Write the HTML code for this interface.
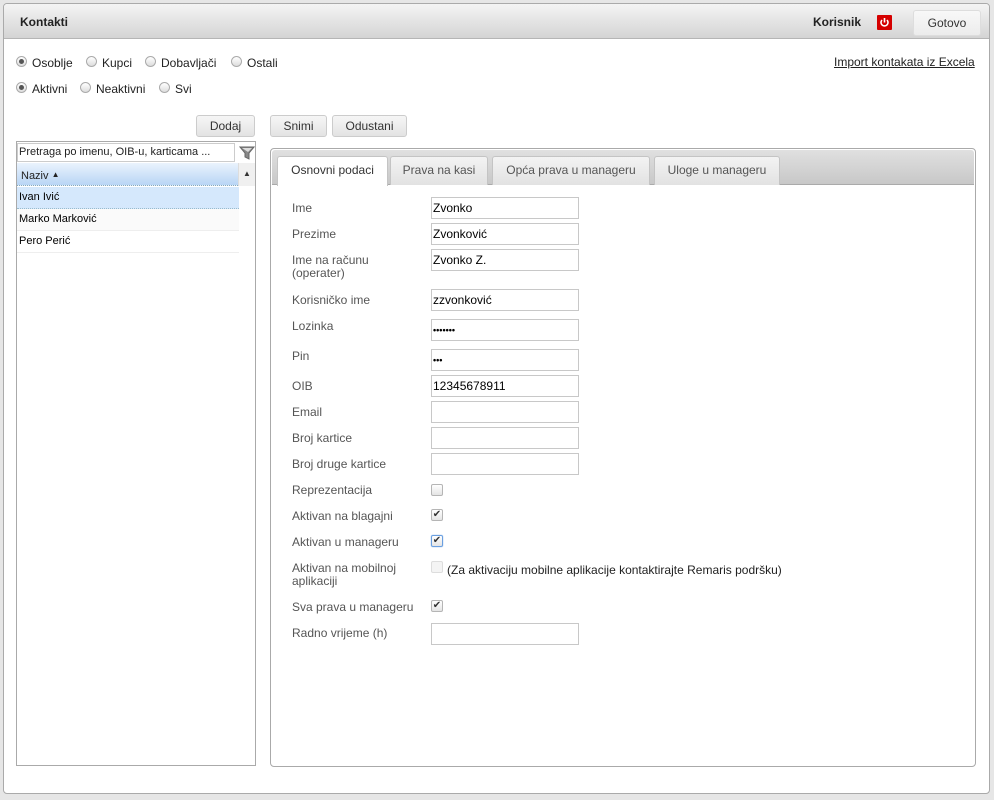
<!DOCTYPE html>
<html><head><meta charset="utf-8"><style>
*{box-sizing:border-box;margin:0;padding:0}
body{width:994px;height:800px;background:#e6e6e6;font-family:"Liberation Sans",Arial,sans-serif;font-size:12px;color:#222;position:relative;overflow:hidden}
.a{position:absolute}
#main{left:3px;top:3px;width:987px;height:791px;background:#fff;border:1px solid #aaa;border-radius:4px}
#hdr{left:4px;top:4px;width:985px;height:35px;background:linear-gradient(#f4f4f4,#d4d4d4);border-bottom:1px solid #b5b5b5;border-radius:3px 3px 0 0}
.btn{position:absolute;height:22px;border:1px solid #ccc;border-radius:3px;background:linear-gradient(#f6f6f6,#e3e3e3);color:#333;font-size:12px;text-align:center;line-height:20px}
.rad{position:absolute;width:11px;height:11px;border:1px solid #aaa;border-radius:50%;background:linear-gradient(#fff,#ddd)}
.rad.on::after{content:"";position:absolute;left:2px;top:2px;width:5px;height:5px;border-radius:50%;background:#555}
.lbl{position:absolute;left:292px;color:#555;font-size:12px;line-height:13px}
.inp{position:absolute;left:431px;width:148px;height:22px;border:1px solid #c8c8c8;font-size:12px;line-height:20px;padding-left:1px;color:#000}
.cb{position:absolute;left:431px;width:12px;height:12px;border:1px solid #b5b5b5;border-radius:2px;background:linear-gradient(#fff,#e4e4e4);font-size:10px;line-height:10px;text-align:center;color:#333}
.tab{position:absolute;top:156px;height:29px;border:1px solid #c4c4c4;border-bottom:none;border-radius:3px 3px 0 0;background:linear-gradient(#f3f3f3,#e2e2e2);color:#555;text-align:center;line-height:27px;font-size:12px}
.row{position:absolute;left:17px;width:222px;height:22px;line-height:21px;padding-left:2px;font-size:11px;color:#000;border-bottom:1px solid #eee}
</style></head><body>
<div class="a" id="main"></div>
<div class="a" id="hdr"></div>
<div class="a" style="left:20px;top:15px;font-weight:bold;font-size:12px;color:#222">Kontakti</div>
<div class="a" style="left:813px;top:15px;font-weight:bold;font-size:12px;color:#222">Korisnik</div>
<div class="a" style="left:877px;top:15px;width:15px;height:15px;background:#d50000;border-radius:1px"><svg width="15" height="15" viewBox="0 0 15 15"><path d="M5 5A3.5 3.5 0 1 0 10 5" fill="none" stroke="#fff" stroke-width="1.6"/><path d="M7.5 3v4.5" stroke="#fff" stroke-width="1.6"/></svg></div>
<div class="btn" style="left:913px;top:10px;width:68px;height:26px;line-height:24px;background:linear-gradient(#f8f8f8,#ececec);border-color:#ddd">Gotovo</div>
<div class="a" style="left:834px;top:55px;text-decoration:underline;color:#222">Import kontakata iz Excela</div>

<div class="rad on" style="left:16px;top:56px"></div><div class="a" style="left:32px;top:56px">Osoblje</div>
<div class="rad" style="left:86px;top:56px"></div><div class="a" style="left:102px;top:56px">Kupci</div>
<div class="rad" style="left:145px;top:56px"></div><div class="a" style="left:161px;top:56px">Dobavljači</div>
<div class="rad" style="left:231px;top:56px"></div><div class="a" style="left:247px;top:56px">Ostali</div>
<div class="rad on" style="left:16px;top:82px"></div><div class="a" style="left:32px;top:82px">Aktivni</div>
<div class="rad" style="left:80px;top:82px"></div><div class="a" style="left:96px;top:82px">Neaktivni</div>
<div class="rad" style="left:159px;top:82px"></div><div class="a" style="left:175px;top:82px">Svi</div>

<div class="btn" style="left:196px;top:115px;width:59px">Dodaj</div>
<div class="btn" style="left:270px;top:115px;width:57px">Snimi</div>
<div class="btn" style="left:332px;top:115px;width:75px">Odustani</div>

<div class="a" style="left:16px;top:141px;width:240px;height:625px;border:1px solid #aaa"></div>
<div class="a" style="left:17px;top:143px;width:218px;height:19px;border:1px solid #ccc;font-size:11px;line-height:17px;padding-left:1px;color:#222">Pretraga po imenu, OIB-u, karticama ...</div>
<svg class="a" style="left:239px;top:145px" width="16" height="16" viewBox="0 0 16 16"><path d="M1 2h14l-5 6v6l-4-2v-4z" fill="#888" stroke="#666"/><path d="M3 3h10l-4 4" fill="#ddd"/></svg>
<div class="a" style="left:17px;top:163px;width:221px;height:23px;background:linear-gradient(#eaf3fd,#b8d5f5);border-bottom:1px dotted #8ab;font-size:11px;line-height:23px;padding-left:4px">Naziv <span style="font-size:8px;vertical-align:2px">▲</span></div>
<div class="a" style="left:238px;top:163px;width:17px;height:23px;background:#f0f0f0;border-left:1px solid #ddd;font-size:8px;text-align:center;line-height:22px;color:#333">▲</div>
<div class="row" style="top:187px;background:#d5e8fc;border-bottom:1px dotted #9bc">Ivan Ivić</div>
<div class="row" style="top:209px;background:#fafafa">Marko Marković</div>
<div class="row" style="top:231px">Pero Perić</div>

<div class="a" style="left:270px;top:148px;width:706px;height:619px;border:1px solid #aaa;border-radius:4px"></div>
<div class="a" style="left:272px;top:150px;width:702px;height:35px;background:linear-gradient(#e0e0e0,#c8c8c8);border-bottom:1px solid #aaa;border-radius:3px 3px 0 0"></div>
<div class="tab" style="left:277px;width:111px;background:#fff;color:#333;height:30px">Osnovni podaci</div>
<div class="tab" style="left:390px;width:98px">Prava na kasi</div>
<div class="tab" style="left:492px;width:158px">Opća prava u manageru</div>
<div class="tab" style="left:654px;width:126px">Uloge u manageru</div>

<div class="lbl" style="top:202px">Ime</div><div class="inp" style="top:197px">Zvonko</div>
<div class="lbl" style="top:228px">Prezime</div><div class="inp" style="top:223px">Zvonković</div>
<div class="lbl" style="top:254px">Ime na računu<br>(operater)</div><div class="inp" style="top:249px">Zvonko Z.</div>
<div class="lbl" style="top:294px">Korisničko ime</div><div class="inp" style="top:289px">zzvonković</div>
<div class="lbl" style="top:320px">Lozinka</div><div class="inp" style="top:319px;font-size:9px;font-weight:bold">•••••••</div>
<div class="lbl" style="top:350px">Pin</div><div class="inp" style="top:349px;font-size:9px;font-weight:bold">•••</div>
<div class="lbl" style="top:380px">OIB</div><div class="inp" style="top:375px">12345678911</div>
<div class="lbl" style="top:406px">Email</div><div class="inp" style="top:401px"></div>
<div class="lbl" style="top:432px">Broj kartice</div><div class="inp" style="top:427px"></div>
<div class="lbl" style="top:458px">Broj druge kartice</div><div class="inp" style="top:453px"></div>
<div class="lbl" style="top:484px">Reprezentacija</div><div class="cb" style="top:484px"></div>
<div class="lbl" style="top:510px">Aktivan na blagajni</div><div class="cb" style="top:509px">✔</div>
<div class="lbl" style="top:536px">Aktivan u manageru</div><div class="cb" style="top:535px;border-color:#6a9fe0;box-shadow:0 0 1px #6a9fe0">✔</div>
<div class="lbl" style="top:562px">Aktivan na mobilnoj<br>aplikaciji</div><div class="cb" style="top:561px;border-color:#ddd;background:#f4f4f4"></div>
<div class="a" style="left:447px;top:563px;color:#222">(Za aktivaciju mobilne aplikacije kontaktirajte Remaris podršku)</div>
<div class="lbl" style="top:601px">Sva prava u manageru</div><div class="cb" style="top:600px">✔</div>
<div class="lbl" style="top:627px">Radno vrijeme (h)</div><div class="inp" style="top:623px"></div>
</body></html>
